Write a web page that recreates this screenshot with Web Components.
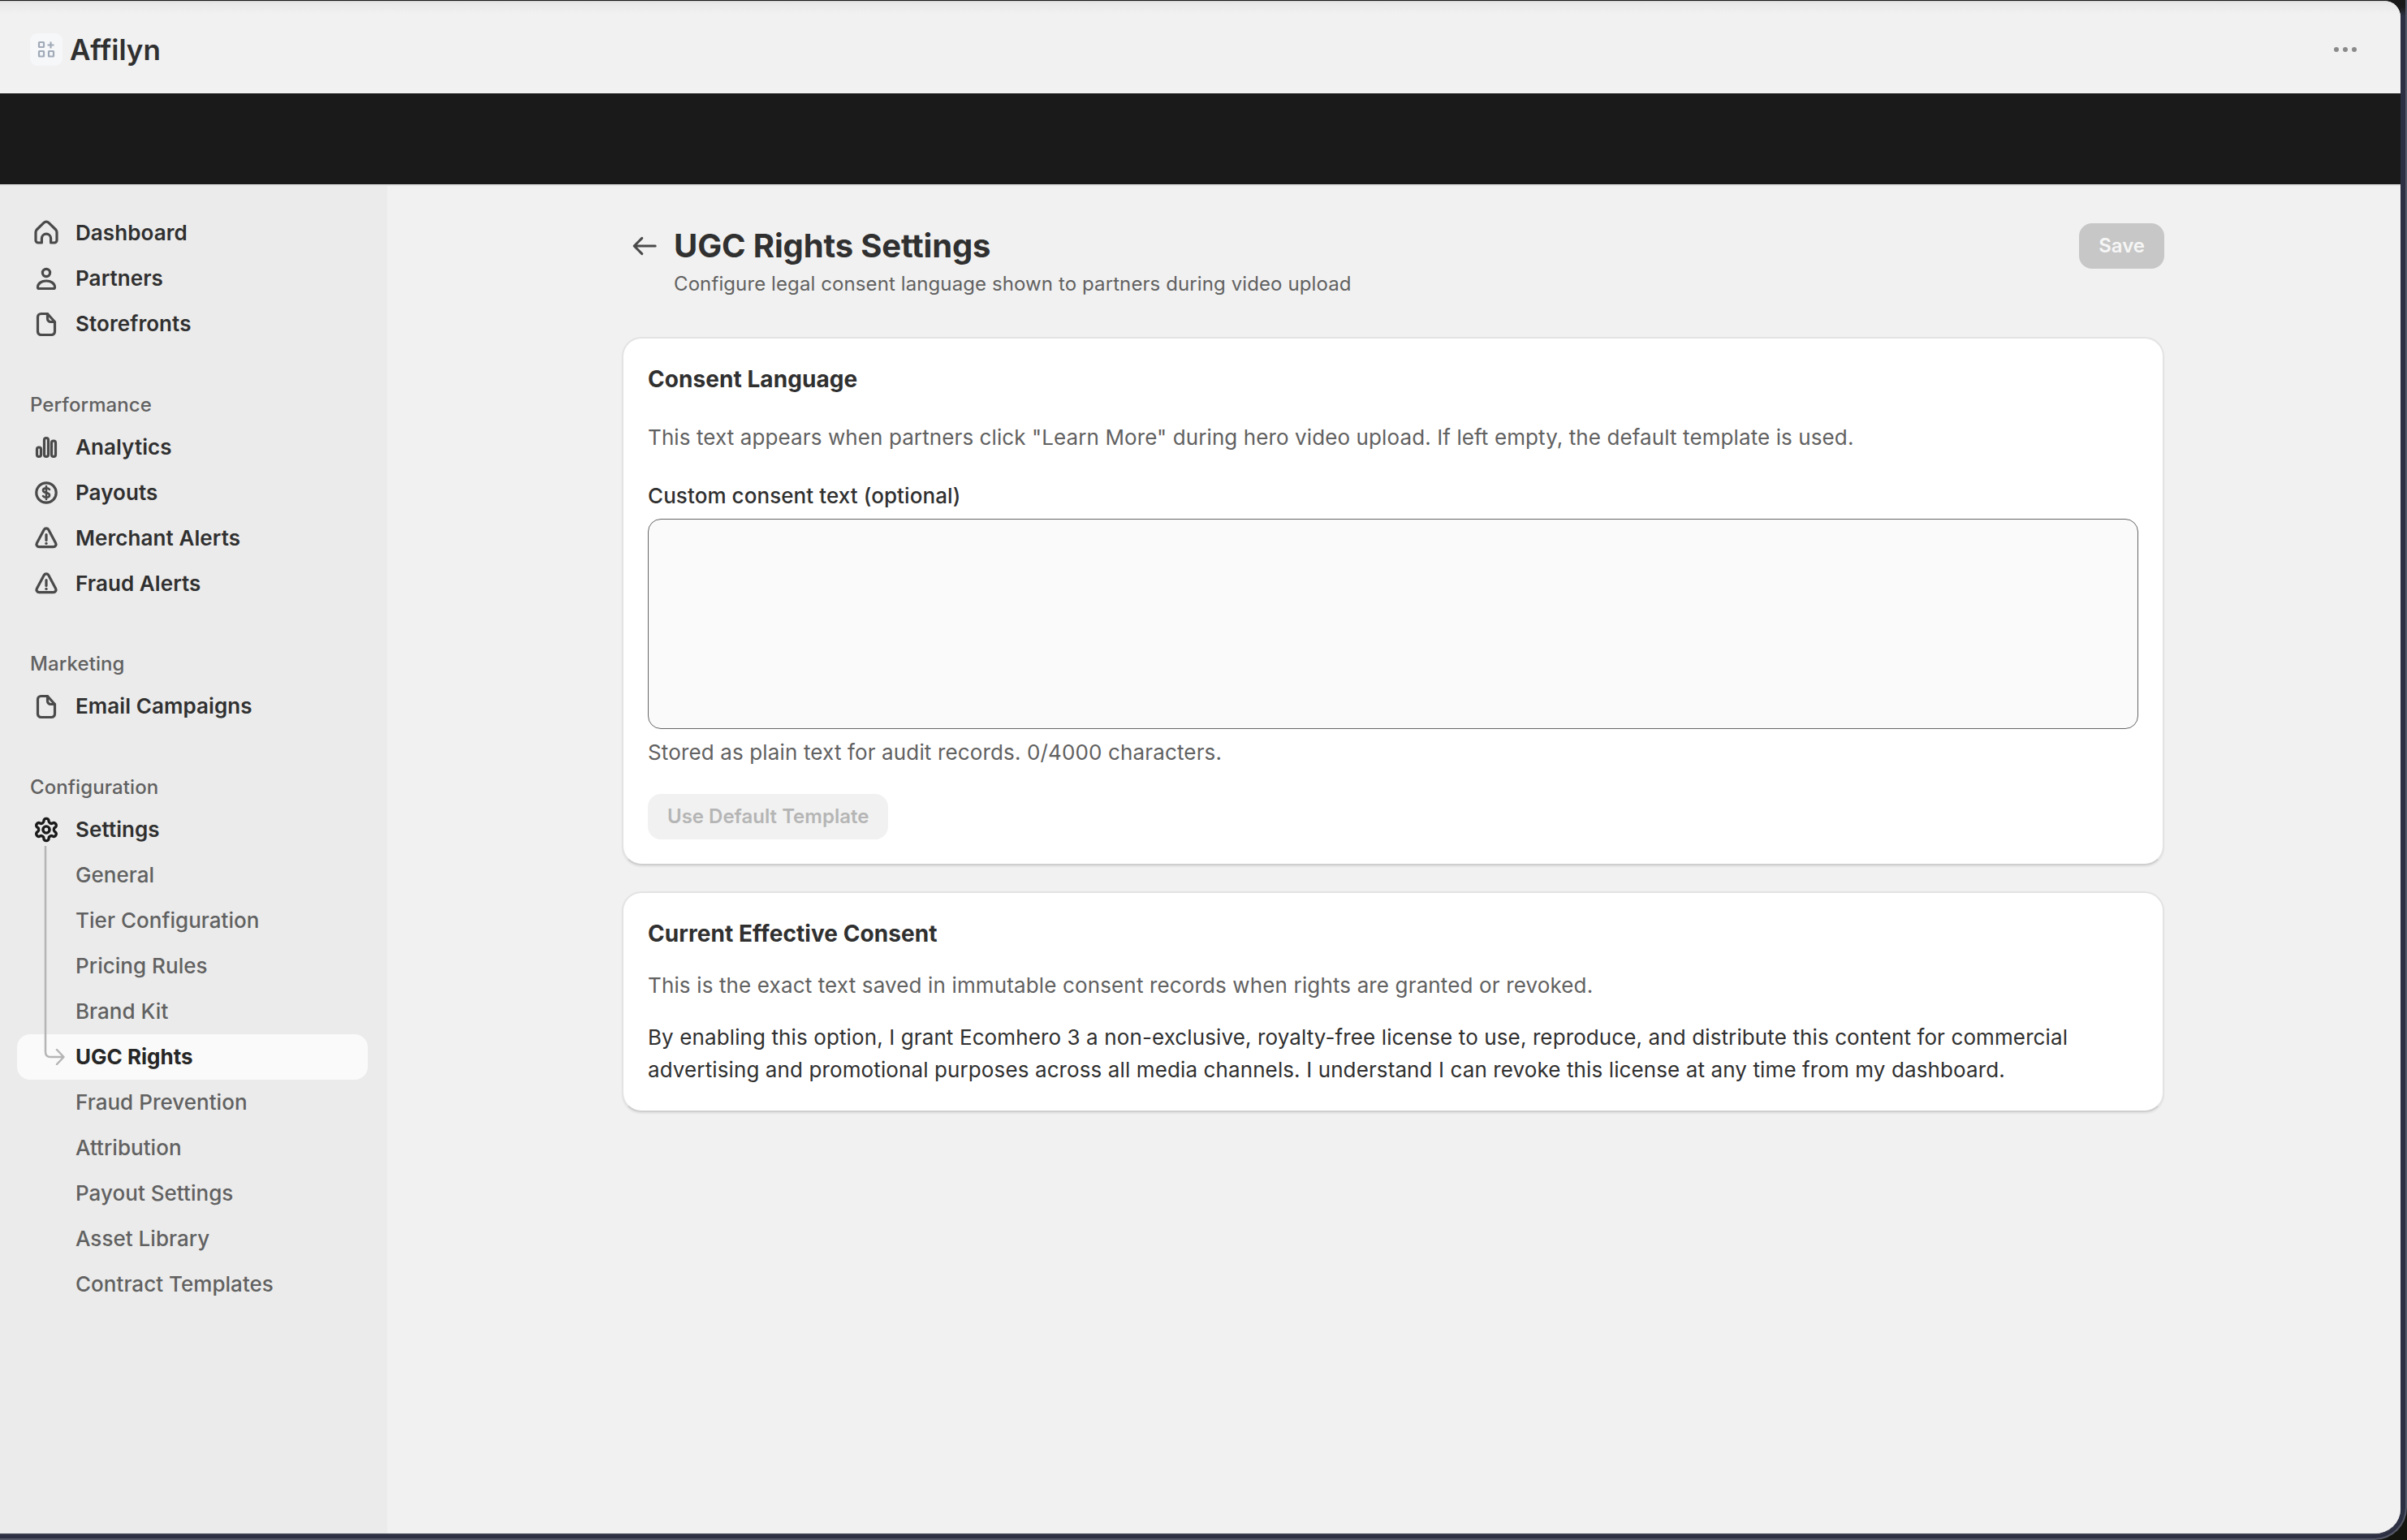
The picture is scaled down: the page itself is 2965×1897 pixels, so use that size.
<!doctype html>
<html lang="en">
<head>
<meta charset="utf-8">
<title>UGC Rights Settings</title>
<style>
html,body{margin:0;padding:0;background:#15150f;overflow:hidden}
body{font-family:Inter,"Noto Sans",sans-serif;font-size:26px;line-height:40px;color:#303030}
</style>
</head>
<body>
<app-shell>
  <top-bar slot="top">Affilyn</top-bar>
  <black-band slot="top"></black-band>
  <side-nav slot="side">
    <nav-section>
      <nav-item icon="home">Dashboard</nav-item>
      <nav-item icon="person">Partners</nav-item>
      <nav-item icon="file">Storefronts</nav-item>
    </nav-section>
    <nav-section label="Performance">
      <nav-item icon="bars">Analytics</nav-item>
      <nav-item icon="dollar">Payouts</nav-item>
      <nav-item icon="alert">Merchant Alerts</nav-item>
      <nav-item icon="alert">Fraud Alerts</nav-item>
    </nav-section>
    <nav-section label="Marketing">
      <nav-item icon="file">Email Campaigns</nav-item>
    </nav-section>
    <nav-section label="Configuration">
      <nav-item icon="gear" current>Settings</nav-item>
      <sub-nav>
        <nav-item sub>General</nav-item>
        <nav-item sub>Tier Configuration</nav-item>
        <nav-item sub>Pricing Rules</nav-item>
        <nav-item sub>Brand Kit</nav-item>
        <nav-item sub active>UGC Rights</nav-item>
        <nav-item sub>Fraud Prevention</nav-item>
        <nav-item sub>Attribution</nav-item>
        <nav-item sub>Payout Settings</nav-item>
        <nav-item sub>Asset Library</nav-item>
        <nav-item sub>Contract Templates</nav-item>
      </sub-nav>
    </nav-section>
  </side-nav>
  <page-main slot="main">
    <page-header>
      <span slot="title">UGC Rights Settings</span>
      <span slot="subtitle">Configure legal consent language shown to partners during video upload</span>
      <ui-button slot="action" variant="primary">Save</ui-button>
    </page-header>
    <ui-card>
      <card-title>Consent Language</card-title>
      <muted-text style="margin-top:32px">This text appears when partners click "Learn More" during hero video upload. If left empty, the default template is used.</muted-text>
      <text-area-field label="Custom consent text (optional)" hint="Stored as plain text for audit records. 0/4000 characters."></text-area-field>
      <ui-button variant="plain">Use Default Template</ui-button>
    </ui-card>
    <ui-card>
      <card-title>Current Effective Consent</card-title>
      <muted-text style="margin-top:24px;letter-spacing:.14px">This is the exact text saved in immutable consent records when rights are granted or revoked.</muted-text>
      <consent-text style="margin-top:24px">By enabling this option, I grant Ecomhero 3 a non-exclusive, royalty-free license to use, reproduce, and distribute this content for commercial advertising and promotional purposes across all media channels. I understand I can revoke this license at any time from my dashboard.</consent-text>
    </ui-card>
  </page-main>
</app-shell>
<script>
const ICONS={
 home:'<path d="M3.5 14.5V9.6c0-.6.2-1.1.6-1.6l4.4-4.3a2.1 2.1 0 0 1 3 0l4.4 4.3c.4.5.6 1 .6 1.6v4.9a1.5 1.5 0 0 1-1.5 1.5h-2.2v-2.6a2.8 2.8 0 0 0-5.6 0V16H5a1.5 1.5 0 0 1-1.5-1.5z"/>',
 person:'<circle cx="10" cy="6.5" r="2.3"/><path d="M4.75 15.5c0-2.5 2.3-4 5.25-4s5.25 1.5 5.25 4c0 .4-.3.75-.75.75h-9c-.45 0-.75-.35-.75-.75z"/>',
 file:'<path d="M4.75 5.75a2 2 0 0 1 2-2h4l4.5 5v6a2 2 0 0 1-2 2h-6.5a2 2 0 0 1-2-2z"/><path d="M10.75 3.75v3a2 2 0 0 0 2 2h2.5"/>',
 bars:'<rect x="4.25" y="10" width="2.5" height="5.75" rx="1.25"/><rect x="8.75" y="4.25" width="2.5" height="11.5" rx="1.25"/><rect x="13.25" y="6" width="2.5" height="9.75" rx="1.25"/>',
 dollar:'<circle cx="10" cy="10" r="6.1"/><path stroke-width="1.3" d="M12 8c-.4-.6-1.1-.9-2-.9-1.1 0-2 .5-2 1.4s.9 1.3 2 1.5 2 .6 2 1.5-.9 1.4-2 1.4c-.9 0-1.6-.3-2-.9M10 6v8"/>',
 alert:'<path d="M8.6 4.8c.6-1.1 2.2-1.1 2.8 0l4.4 8.2c.6 1.1-.2 2.3-1.4 2.3H5.6c-1.2 0-2-1.2-1.4-2.3z"/><path d="M10 7.8v3.4"/><circle cx="10" cy="13.2" r=".85" fill="currentColor" stroke="none"/>',
 gear:'<g transform="translate(1.84 1.84) scale(.68)" stroke-width="2.5"><path d="M12.22 2h-.44a2 2 0 0 0-2 2v.18a2 2 0 0 1-1 1.73l-.43.25a2 2 0 0 1-2 0l-.15-.08a2 2 0 0 0-2.73.73l-.22.38a2 2 0 0 0 .73 2.73l.15.1a2 2 0 0 1 1 1.72v.51a2 2 0 0 1-1 1.74l-.15.09a2 2 0 0 0-.73 2.73l.22.38a2 2 0 0 0 2.73.73l.15-.08a2 2 0 0 1 2 0l.43.25a2 2 0 0 1 1 1.73V20a2 2 0 0 0 2 2h.44a2 2 0 0 0 2-2v-.18a2 2 0 0 1 1-1.73l.43-.25a2 2 0 0 1 2 0l.15.08a2 2 0 0 0 2.73-.73l.22-.39a2 2 0 0 0-.73-2.73l-.15-.08a2 2 0 0 1-1-1.74v-.5a2 2 0 0 1 1-1.74l.15-.09a2 2 0 0 0 .73-2.73l-.22-.38a2 2 0 0 0-2.73-.73l-.15.08a2 2 0 0 1-2 0l-.43-.25a2 2 0 0 1-1-1.73V4a2 2 0 0 0-2-2z"/><circle cx="12" cy="12" r="3"/></g>'
};
function el(name,html){
  customElements.define(name,class extends HTMLElement{
    constructor(){super();this.attachShadow({mode:'open'}).innerHTML=typeof html==='function'?html(this):html;}
  });
}
el('app-shell',`<style>
:host{display:block;width:2965px;height:1897px;background:#15150f}
.strip{box-sizing:border-box;width:2965px;height:1897px;padding:1px 6px 4px 0;
background:linear-gradient(#1a1a1a,#1a1a1a) right 6px top 0/30px 30px no-repeat,linear-gradient(#1a1a1a 8px,#2d3042 20px);
border-right:2px solid #555868;border-bottom:2px solid #555868;border-bottom-right-radius:40px}
.app{width:2957px;height:1890px;background:#f1f1f1;border-radius:0 20px 32px 0;overflow:hidden;display:flex;flex-direction:column;border-bottom:2px solid #3a3d4e;box-sizing:border-box}
.body{flex:1;display:flex;min-height:0;border-top:2px solid #e3e3e3}
::slotted([slot=side]){width:477px;flex:none}
::slotted([slot=main]){flex:1;min-width:0}
</style><div class="strip"><div class="app"><slot name="top"></slot><div class="body"><slot name="side"></slot><slot name="main"></slot></div></div></div>`);
el('top-bar',`<style>
:host{display:flex;align-items:center;height:114px;box-sizing:border-box;padding:6px 54px 0 37px;background:linear-gradient(#cfcfcf,#e8e8e8 2px,#f1f1f1 16px);font:600 35px/48px Inter,sans-serif;color:#303030;flex:none}
.logo{width:40px;height:40px;border-radius:9px;background:#f6f7f9;display:block;margin-right:9px;flex:none}
.name{flex:1}
.more{display:flex;gap:5px}
.more i{width:6px;height:6px;border-radius:50%;background:#8a8a8a}
</style>
<svg class="logo" viewBox="0 0 40 40" fill="none" stroke="#a0aab8" stroke-width="2.2"><rect x="11" y="11" width="6" height="6" rx=".6"/><rect x="11" y="22" width="6" height="6.5" rx=".6"/><rect x="23" y="22" width="6" height="6.5" rx=".6"/><path d="M25.5 10.5v8M21.5 14.5h8"/></svg>
<span class="name"><slot></slot></span><span class="more"><i></i><i></i><i></i></span>`);
el('black-band',`<style>:host{display:block;height:112px;background:#1a1a1a;flex:none}</style>`);
el('side-nav',`<style>:host{display:flex;flex-direction:column;box-sizing:border-box;padding:30px 24px 0 21px;background:#ebebeb;gap:51.5px}</style><slot></slot>`);
el('nav-section',t=>`<style>:host{display:block}
.l{font:500 24px/40px Inter,sans-serif;color:#616161;padding-left:16px;margin-bottom:4px;letter-spacing:.1px}</style>
${t.getAttribute('label')?`<div class="l">${t.getAttribute('label')}</div>`:''}<slot></slot>`);
el('nav-item',t=>{
 const sub=t.hasAttribute('sub'),act=t.hasAttribute('active'),cur=t.hasAttribute('current');
 const ic=t.getAttribute('icon');
 return `<style>:host{display:flex;align-items:center;height:56px;box-sizing:border-box;padding-left:16px;border-radius:16px;font:${act?650:sub?450:600} 26px/40px Inter,sans-serif;letter-spacing:${act?0:sub?.03:.08}px;color:${act?'#262626':sub?'#616161':'#303030'};${act?'background:#fafafa;':''}}
svg{width:40px;height:40px;flex:none;fill:none;stroke:${cur?'#1a1a1a':'#4a4a4a'};stroke-width:1.6;stroke-linecap:round;stroke-linejoin:round;color:${cur?'#1a1a1a':'#4a4a4a'}}
.pad{width:40px;flex:none}.t{margin-left:16px}</style>
${ic?`<svg viewBox="0 0 20 20">${ICONS[ic]}</svg>`:'<span class="pad"></span>'}<span class="t"><slot></slot></span>`;});
el('sub-nav',`<style>:host{display:block;position:relative}
svg{position:absolute;left:33px;top:-8px;width:30px;height:270px;fill:none;stroke:#b5b5b5;stroke-width:2.5;stroke-linecap:round;stroke-linejoin:round;pointer-events:none}</style>
<slot></slot><svg viewBox="0 0 30 270"><path d="M2 1V254q0 6 6 6H24M16 251l8.5 9-8.5 9"/></svg>`);
el('page-main',`<style>:host{display:flex;flex-direction:column;align-items:center;box-sizing:border-box;padding:46px 2px 0 0;background:#f1f1f1}
.c{width:1900px;display:flex;flex-direction:column;gap:32px}</style><div class="c"><slot></slot></div>`);
el('page-header',`<style>:host{display:flex;align-items:flex-start;height:107px;box-sizing:border-box;padding-left:8px;margin-bottom:1px;font-family:Inter,sans-serif}
.back{width:40px;height:40px;margin-top:8px;flex:none;fill:none;stroke:#4a4a4a;stroke-width:1.5;stroke-linecap:round;stroke-linejoin:round}
.txt{flex:1;margin-left:16px;margin-top:8px}
.title{font:700 40px/40px Inter,sans-serif;color:#303030;letter-spacing:-.15px}
.sub{font:400 24px/40px Inter,sans-serif;color:#616161;margin-top:7px;letter-spacing:.1px}
::slotted([slot=action]){flex:none}
</style><svg class="back" viewBox="0 0 20 20"><path d="M16.6 10H3.6M8.4 5.2 3.6 10l4.8 4.8"/></svg>
<div class="txt"><div class="title"><slot name="title"></slot></div><div class="sub"><slot name="subtitle"></slot></div></div>
<slot name="action"></slot>`);
el('ui-button',t=>{const p=t.getAttribute('variant')==='primary';return `<style>:host{display:inline-flex;align-items:center;justify-content:center;width:fit-content;height:56px;box-sizing:border-box;padding:0 24px;border-radius:16px;font:600 24px/40px Inter,sans-serif;background:${p?'#c7c7c7':'#f1f1f1'};color:${p?'#f6f6f6':'#b5b5b5'}}</style><slot></slot>`;});
el('ui-card',`<style>:host{display:flex;flex-direction:column;align-items:stretch;box-sizing:border-box;background:#fff;border:2px solid #e3e3e3;border-bottom-color:#cfcfcf;border-radius:24px;padding:30px 30px 30px;box-shadow:0 2px 2px rgba(0,0,0,.06)}
::slotted(ui-button){align-self:flex-start}</style><slot></slot>`);
el('card-title',`<style>:host{display:block;font:650 28px/40px Inter,sans-serif;color:#303030;letter-spacing:.06px}</style><slot></slot>`);
el('muted-text',`<style>:host{display:block;font:400 26px/40px Inter,sans-serif;color:#616161;letter-spacing:.1px}</style><slot></slot>`);
el('consent-text',`<style>:host{display:block;font:400 26px/40px Inter,sans-serif;color:#303030;letter-spacing:.11px}</style><slot></slot>`);
el('text-area-field',t=>`<style>:host{display:block;margin:32px 0 31px;font:400 26px/40px Inter,sans-serif}
.l{color:#303030;font-weight:450;margin-bottom:8px;letter-spacing:.08px}
textarea{display:block;width:100%;height:259px;box-sizing:border-box;border:1px solid #666;border-radius:16px;background:#fafafa;resize:none;margin:0;padding:12px;outline:none}
.h{color:#616161;margin-top:9px;letter-spacing:.14px}</style>
<div class="l">${t.getAttribute('label')}</div><textarea aria-label="${t.getAttribute('label')}"></textarea><div class="h">${t.getAttribute('hint')}</div>`);
</script>
</body>
</html>
